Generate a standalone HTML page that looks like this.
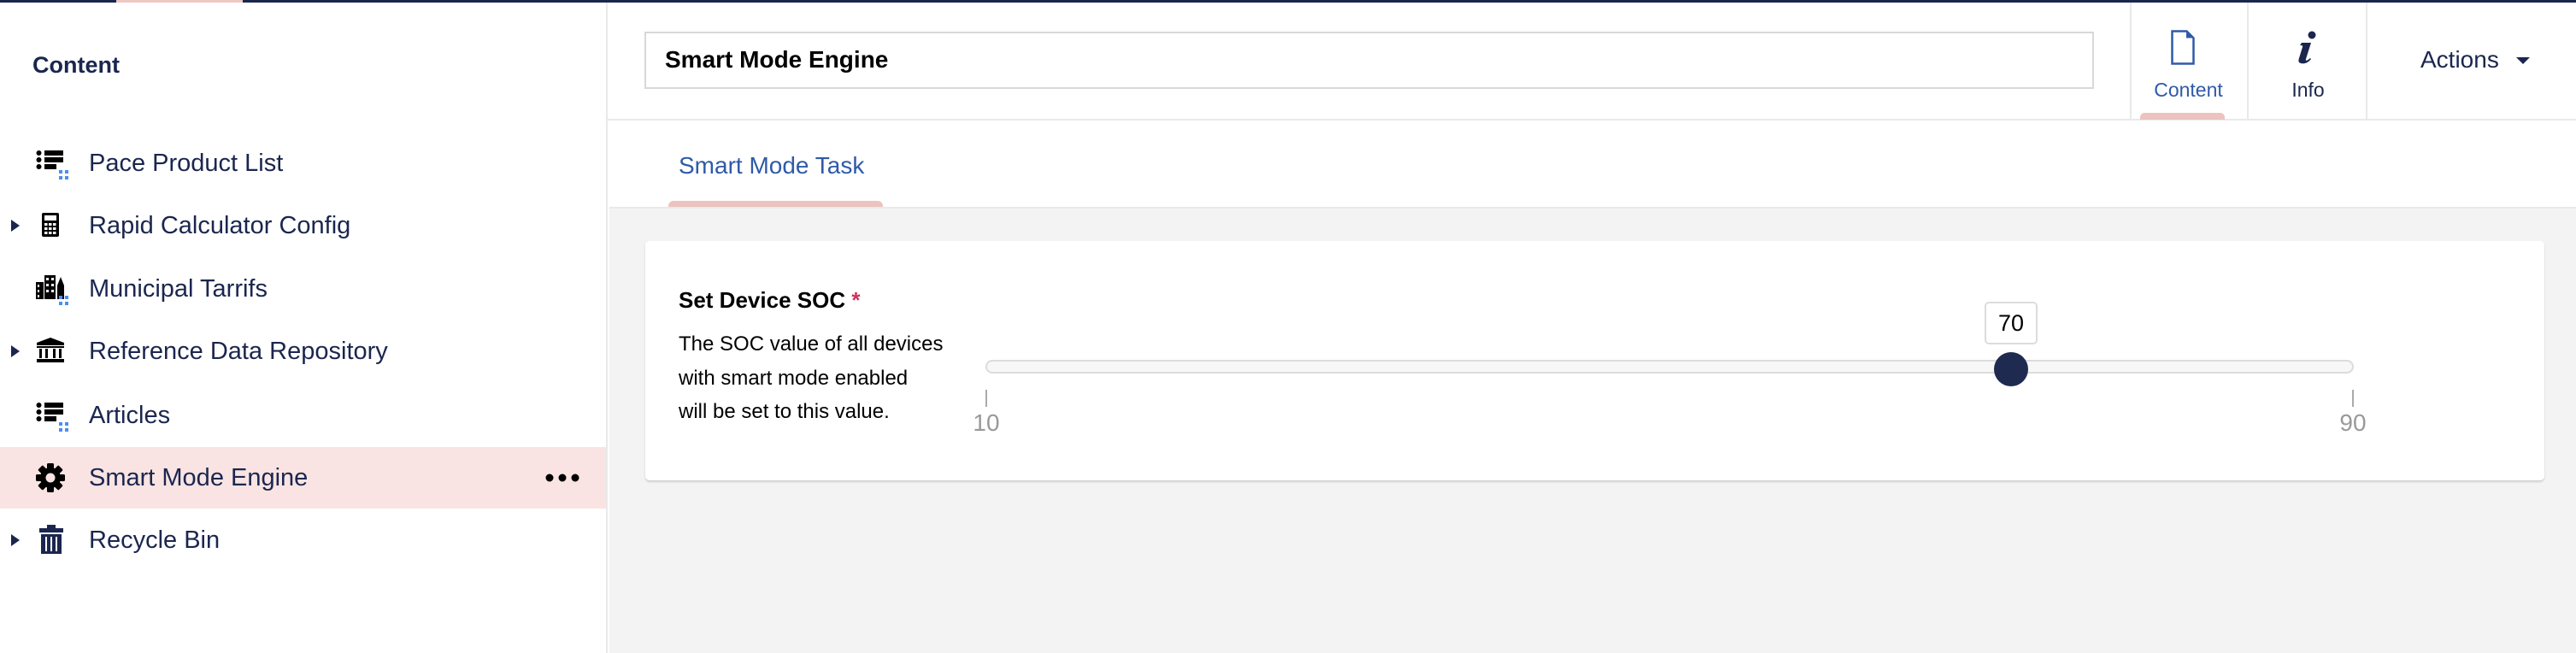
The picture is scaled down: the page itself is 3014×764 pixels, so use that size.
<!DOCTYPE html>
<html><head><meta charset="utf-8"><style>
*{margin:0;padding:0;box-sizing:border-box}
body{width:3014px;height:764px;overflow:hidden;background:#fff;font-family:"Liberation Sans",sans-serif;color:#1b264f;position:relative}
.a{position:absolute}
.topbar{left:0;top:0;width:3014px;height:3px;background:#1b264f}
.side{left:0;top:3px;width:711px;height:761px;border-right:2px solid #e9e9eb;background:#fff}
.item{position:absolute;left:0;width:709px;height:72px;font-size:29px;line-height:72px}
.item .t{position:absolute;left:104px;top:0}
.item svg{position:absolute}
.caret{position:absolute;left:13px;top:29px;width:0;height:0;border-top:7px solid transparent;border-bottom:7px solid transparent;border-left:10px solid #1b264f}
.ico{left:42px;top:20px}
.sel{background:#f9e4e3}
</style></head><body>
<div class="a topbar"></div>
<div class="a" style="left:136px;top:0;width:148px;height:3px;background:#efc7c2"></div>
<div class="a side">
 <div class="a" style="left:38px;top:58px;font-size:27px;font-weight:bold">Content</div>
</div>
<div class="item" style="top:155px"><svg class="ico" width="40" height="36" viewBox="0 0 40 36"><circle cx="3.5" cy="4" r="3" fill="#000"/><circle cx="3.5" cy="12" r="3" fill="#000"/><circle cx="3.5" cy="20" r="3" fill="#000"/><rect x="10" y="1" width="22" height="6" fill="#000"/><rect x="10" y="9" width="22" height="6" fill="#000"/><rect x="10" y="17" width="14" height="6" fill="#000"/><g fill="#4a8ff0"><rect x="27" y="24" width="4" height="4"/><rect x="34" y="24" width="4" height="4"/><rect x="27" y="31" width="4" height="4"/><rect x="34" y="31" width="4" height="4"/></g></svg><span class="t">Pace Product List</span></div>
<div class="item" style="top:228px"><div class="caret"></div><svg class="a" style="left:48px;top:20px" width="22" height="30" viewBox="0 0 22 30"><rect x="1" y="1" width="20" height="28" rx="2" fill="#000"/><rect x="4" y="4" width="14" height="6" fill="#fff"/><g fill="#fff"><rect x="4" y="13" width="3.5" height="3"/><rect x="9" y="13" width="3.5" height="3"/><rect x="14" y="13" width="3.5" height="3"/><rect x="4" y="18" width="3.5" height="3"/><rect x="9" y="18" width="3.5" height="3"/><rect x="14" y="18" width="3.5" height="3"/><rect x="4" y="23" width="3.5" height="3"/><rect x="9" y="23" width="3.5" height="3"/><rect x="14" y="23" width="3.5" height="3"/></g></svg><span class="t">Rapid Calculator Config</span></div>
<div class="item" style="top:302px"><svg class="ico" style="top:18px" width="40" height="38" viewBox="0 0 40 38"><rect x="0" y="10" width="9" height="20" fill="#000"/><rect x="10" y="2" width="13" height="28" fill="#000"/><path d="M25 30V14l4-10 4 10v16z" fill="#000"/><g fill="#fff"><rect x="2" y="13" width="2" height="3"/><rect x="2" y="19" width="2" height="3"/><rect x="2" y="25" width="2" height="3"/><rect x="12" y="5" width="3" height="3"/><rect x="18" y="5" width="3" height="3"/><rect x="12" y="12" width="3" height="3"/><rect x="18" y="12" width="3" height="3"/><rect x="12" y="19" width="3" height="3"/><rect x="18" y="19" width="3" height="3"/></g><g fill="#4a8ff0"><rect x="27" y="26" width="4" height="4"/><rect x="34" y="26" width="4" height="4"/><rect x="27" y="33" width="4" height="4"/><rect x="34" y="33" width="4" height="4"/></g></svg><span class="t">Municipal Tarrifs</span></div>
<div class="item" style="top:375px"><div class="caret"></div><svg class="ico" style="top:20px" width="34" height="30" viewBox="0 0 34 30"><path d="M17 0L1 6v3h32V6z" fill="#000"/><rect x="1" y="10" width="32" height="2" fill="#000"/><rect x="4" y="13" width="3" height="11" fill="#000"/><rect x="11" y="13" width="3" height="11" fill="#000"/><rect x="20" y="13" width="3" height="11" fill="#000"/><rect x="27" y="13" width="3" height="11" fill="#000"/><rect x="1" y="25" width="32" height="4" fill="#000"/></svg><span class="t">Reference Data Repository</span></div>
<div class="item" style="top:450px"><svg class="ico" width="40" height="36" viewBox="0 0 40 36"><circle cx="3.5" cy="4" r="3" fill="#000"/><circle cx="3.5" cy="12" r="3" fill="#000"/><circle cx="3.5" cy="20" r="3" fill="#000"/><rect x="10" y="1" width="22" height="6" fill="#000"/><rect x="10" y="9" width="22" height="6" fill="#000"/><rect x="10" y="17" width="14" height="6" fill="#000"/><g fill="#4a8ff0"><rect x="27" y="24" width="4" height="4"/><rect x="34" y="24" width="4" height="4"/><rect x="27" y="31" width="4" height="4"/><rect x="34" y="31" width="4" height="4"/></g></svg><span class="t">Articles</span></div>
<div class="item sel" style="top:523px"><svg class="ico" style="top:19px" width="34" height="34" viewBox="0 0 34 34"><g fill="#000" transform="translate(17 17)"><circle r="12"/><rect x="-4" y="-17" width="8" height="34" rx="1.5"/><rect x="-4" y="-17" width="8" height="34" rx="1.5" transform="rotate(45)"/><rect x="-4" y="-17" width="8" height="34" rx="1.5" transform="rotate(90)"/><rect x="-4" y="-17" width="8" height="34" rx="1.5" transform="rotate(135)"/><circle r="5.5" fill="#f9e4e3"/></g></svg><span class="t">Smart Mode Engine</span>
<svg class="a" style="left:638px;top:30px" width="40" height="12"><circle cx="5" cy="6" r="4.5" fill="#000"/><circle cx="20" cy="6" r="4.5" fill="#000"/><circle cx="35" cy="6" r="4.5" fill="#000"/></svg></div>
<div class="item" style="top:596px"><div class="caret"></div><svg class="a" style="left:46px;top:18px" width="28" height="34" viewBox="0 0 28 34"><rect x="9" y="0" width="10" height="4" fill="#1b264f"/><rect x="0" y="4" width="28" height="5" fill="#1b264f"/><rect x="2" y="11" width="24" height="23" fill="#1b264f"/><g fill="#fff"><rect x="7" y="14" width="2" height="17"/><rect x="13" y="14" width="2" height="17"/><rect x="19" y="14" width="2" height="17"/></g></svg><span class="t">Recycle Bin</span></div>

<div class="a" style="left:711px;top:3px;width:2303px;height:138px;border-bottom:2px solid #e9e9eb"></div>
<div class="a" style="left:754px;top:37px;width:1696px;height:67px;border:2px solid #d8d8d8"></div>
<div class="a" style="left:778px;top:54px;font-size:28px;font-weight:bold;color:#000">Smart Mode Engine</div>
<div class="a" style="left:2492px;top:3px;width:2px;height:137px;background:#e9e9eb"></div>
<div class="a" style="left:2629px;top:3px;width:2px;height:137px;background:#e9e9eb"></div>
<div class="a" style="left:2768px;top:3px;width:2px;height:137px;background:#e9e9eb"></div>
<svg class="a" style="left:2540px;top:35px" width="28" height="42" viewBox="0 0 28 42"><path d="M1.5 1.5h17l8 8v30h-25z" fill="none" stroke="#2f5aa8" stroke-width="2.5"/><path d="M18 1.5v8h8.5z" fill="#2f5aa8"/></svg>
<div class="a" style="left:2492px;top:92px;width:137px;text-align:center;font-size:23px;color:#2f5aa8">Content</div>
<div class="a" style="left:2504px;top:132px;width:99px;height:8px;background:#ecc3be;border-radius:5px 5px 0 0"></div>
<svg class="a" style="left:2683px;top:36px" width="30" height="40" viewBox="0 0 30 40"><circle cx="22" cy="5" r="4.5" fill="#1b264f"/><path d="M10 14h11l-6 19c-1 3 2 2 5-1l1 1c-4 5-8 6-12 5-3-1-3-3-2-6l4-13c1-2-2-2-3-2z" fill="#1b264f"/></svg>
<div class="a" style="left:2631px;top:92px;width:139px;text-align:center;font-size:23px">Info</div>
<div class="a" style="left:2832px;top:54px;font-size:28px">Actions</div>
<div class="a" style="left:2944px;top:67px;border-left:8px solid transparent;border-right:8px solid transparent;border-top:8px solid #1b264f"></div>

<div class="a" style="left:794px;top:178px;font-size:28px;color:#2f5aa8">Smart Mode Task</div>
<div class="a" style="left:782px;top:235px;width:251px;height:8px;background:#ecc3be;border-radius:6px 6px 0 0"></div>
<div class="a" style="left:713px;top:242px;width:2301px;height:522px;background:#f4f3f4;border-top:2px solid #e9e9eb"></div>
<div class="a" style="left:755px;top:282px;width:2222px;height:280px;background:#fff;border-radius:5px;box-shadow:0 2px 2px rgba(0,0,0,0.15)"></div>
<div class="a" style="left:794px;top:336px;font-size:26px;font-weight:bold;color:#000">Set Device SOC <span style="color:#d0325a">*</span></div>
<div class="a" style="left:794px;top:383px;font-size:24px;line-height:39.5px;color:#000">The SOC value of all devices<br>with smart mode enabled<br>will be set to this value.</div>
<div class="a" style="left:1153px;top:421px;width:1601px;height:16px;background:#f7f7f7;border:2px solid #dcdcdc;border-radius:9px"></div>
<div class="a" style="left:2333px;top:412px;width:40px;height:40px;border-radius:50%;background:#1f2a50"></div>
<div class="a" style="left:2322px;top:353px;width:62px;height:50px;border:2px solid #dcdcdc;border-radius:5px;background:#fff;text-align:center;font-size:27px;line-height:46px;color:#000">70</div>
<div class="a" style="left:1153px;top:456px;width:2px;height:20px;background:#aaa"></div>
<div class="a" style="left:2752px;top:456px;width:2px;height:20px;background:#aaa"></div>
<div class="a" style="left:1114px;top:479px;width:80px;text-align:center;font-size:28px;color:#999">10</div>
<div class="a" style="left:2713px;top:479px;width:80px;text-align:center;font-size:28px;color:#999">90</div>
</body></html>
